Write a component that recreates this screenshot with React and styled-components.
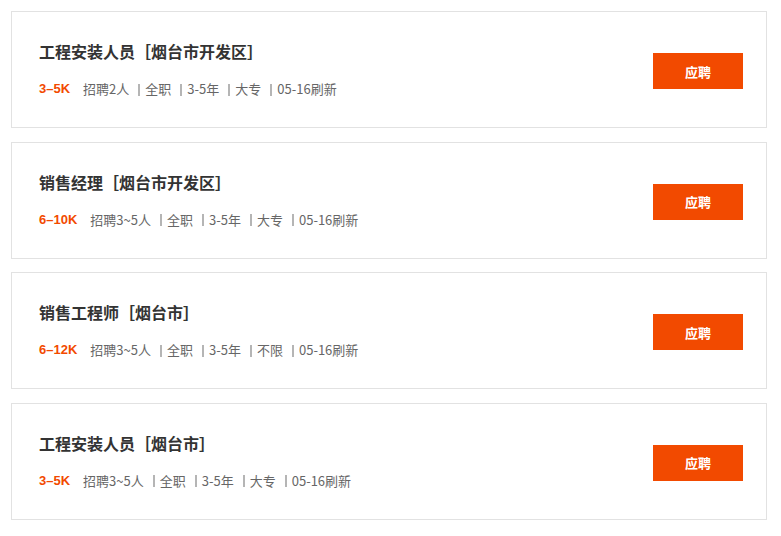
import React from 'react';
import styled, { createGlobalStyle } from 'styled-components';

const GlobalStyle = createGlobalStyle`
  body {
    margin: 0;
    background: #fff;
    font-family: "Liberation Sans", "Noto Sans CJK SC", sans-serif;
  }
`;

const List = styled.div`
  padding: 11px 14px 11px 11px;
  display: flex;
  flex-direction: column;
  gap: 13.5px;
`;

const Card = styled.div`
  height: 117px;
  box-sizing: border-box;
  border: 1px solid #e2e2e2;
  display: flex;
  align-items: center;
  justify-content: space-between;
  padding: 0 23px 0 27px;
`;

const Info = styled.div`
  display: flex;
  flex-direction: column;
  gap: 15px;
  margin-top: 2px;
`;

const Title = styled.div`
  font-size: 16px;
  font-weight: bold;
  color: #333;
  line-height: 22px;
`;

const Meta = styled.div`
  display: flex;
  align-items: center;
  font-family: "Noto Sans CJK SC", sans-serif;
  font-size: 13px;
  line-height: 20px;
  color: #666;
`;

const Salary = styled.span`
  font-family: "Liberation Sans", sans-serif;
  color: #f24a00;
  font-weight: bold;
  margin-right: 13px;
`;

const Sep = styled.span`
  display: inline-block;
  width: 2px;
  height: 12px;
  background: #b5b5b5;
  margin: 1px 5px 0 9px;
`;

const Apply = styled.button`
  width: 90px;
  height: 36px;
  border: none;
  background: #f24a00;
  color: #fff;
  font-size: 13px;
  font-weight: bold;
  font-family: "Noto Sans CJK SC", sans-serif;
  cursor: pointer;
  margin-top: 3px;
`;

const jobs = [
  { title: '工程安装人员［烟台市开发区］', salary: '3–5K', tags: ['招聘2人', '全职', '3-5年', '大专', '05-16刷新'] },
  { title: '销售经理［烟台市开发区］', salary: '6–10K', tags: ['招聘3~5人', '全职', '3-5年', '大专', '05-16刷新'] },
  { title: '销售工程师［烟台市］', salary: '6–12K', tags: ['招聘3~5人', '全职', '3-5年', '不限', '05-16刷新'] },
  { title: '工程安装人员［烟台市］', salary: '3–5K', tags: ['招聘3~5人', '全职', '3-5年', '大专', '05-16刷新'] },
];

export default function App() {
  return (
    <>
      <GlobalStyle />
      <List>
        {jobs.map((job, i) => (
          <Card key={i}>
            <Info>
              <Title>{job.title}</Title>
              <Meta>
                <Salary>{job.salary}</Salary>
                {job.tags.map((t, j) => (
                  <React.Fragment key={j}>
                    {j > 0 && <Sep />}
                    <span>{t}</span>
                  </React.Fragment>
                ))}
              </Meta>
            </Info>
            <Apply>应聘</Apply>
          </Card>
        ))}
      </List>
    </>
  );
}
